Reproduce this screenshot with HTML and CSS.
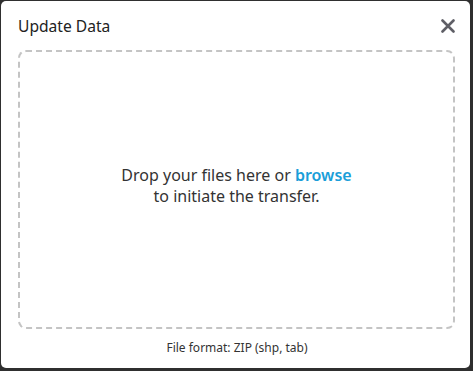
FILE: index.html
```html
<!DOCTYPE html>
<html lang="en">
<head>
  <meta charset="UTF-8" />
  <title>Update Data</title>
  <link rel="stylesheet" href="styles.css">
</head>
<body>
  <div class="modal">
    <div class="modal-head">
      <h2 class="modal-title">Update Data</h2>
      <button class="close-btn" aria-label="Close">
        <svg width="14" height="14" viewBox="0 0 14 14">
          <path d="M1.5 1.5 L12.5 12.5 M12.5 1.5 L1.5 12.5" stroke="#5f5f66" stroke-width="2.6" stroke-linecap="round" />
        </svg>
      </button>
    </div>
    <div class="dropzone">
      <p class="drop-text">Drop your files here or <a href="#" class="browse">browse</a><br />to initiate the transfer.</p>
    </div>
    <p class="format">File format: ZIP (shp, tab)</p>
  </div>
</body>
</html>
```

FILE: styles.css
```css
* {
  box-sizing: border-box;
  margin: 0;
  padding: 0;
}
body {
  font-family: "Noto Sans", Lato, sans-serif;
  background: #2f2f2f;
  width: 473px;
  height: 371px;
  padding: 1px 3px 3px 1px;
  overflow: hidden;
}
.modal {
  background: #fff;
  height: 100%;
  border-radius: 5px;
  padding: 0 14px 0 17px;
  display: flex;
  flex-direction: column;
}
.modal-head {
  display: flex;
  align-items: center;
  justify-content: space-between;
  height: 49px;
  padding-top: 1px;
}
.modal-title {
  font-size: 15.6px;
  font-weight: 400;
  color: #222;
}
.close-btn {
  border: none;
  background: none;
  width: 20px;
  height: 20px;
  display: flex;
  align-items: center;
  justify-content: center;
  cursor: pointer;
  margin-right: -2px;
}
.dropzone {
  height: 279px;
  border: 2px dashed #c4c4c4;
  border-radius: 8px;
  margin-right: 1px;
  display: flex;
  align-items: center;
  justify-content: center;
}
.drop-text {
  font-size: 16px;
  line-height: 21px;
  color: #333;
  text-align: center;
  padding-bottom: 8px;
}
.browse {
  color: #1a9ed9;
  font-weight: 600;
  text-decoration: none;
}
.format {
  font-size: 12px;
  color: #333;
  text-align: center;
  margin-top: 10px;
}
```
